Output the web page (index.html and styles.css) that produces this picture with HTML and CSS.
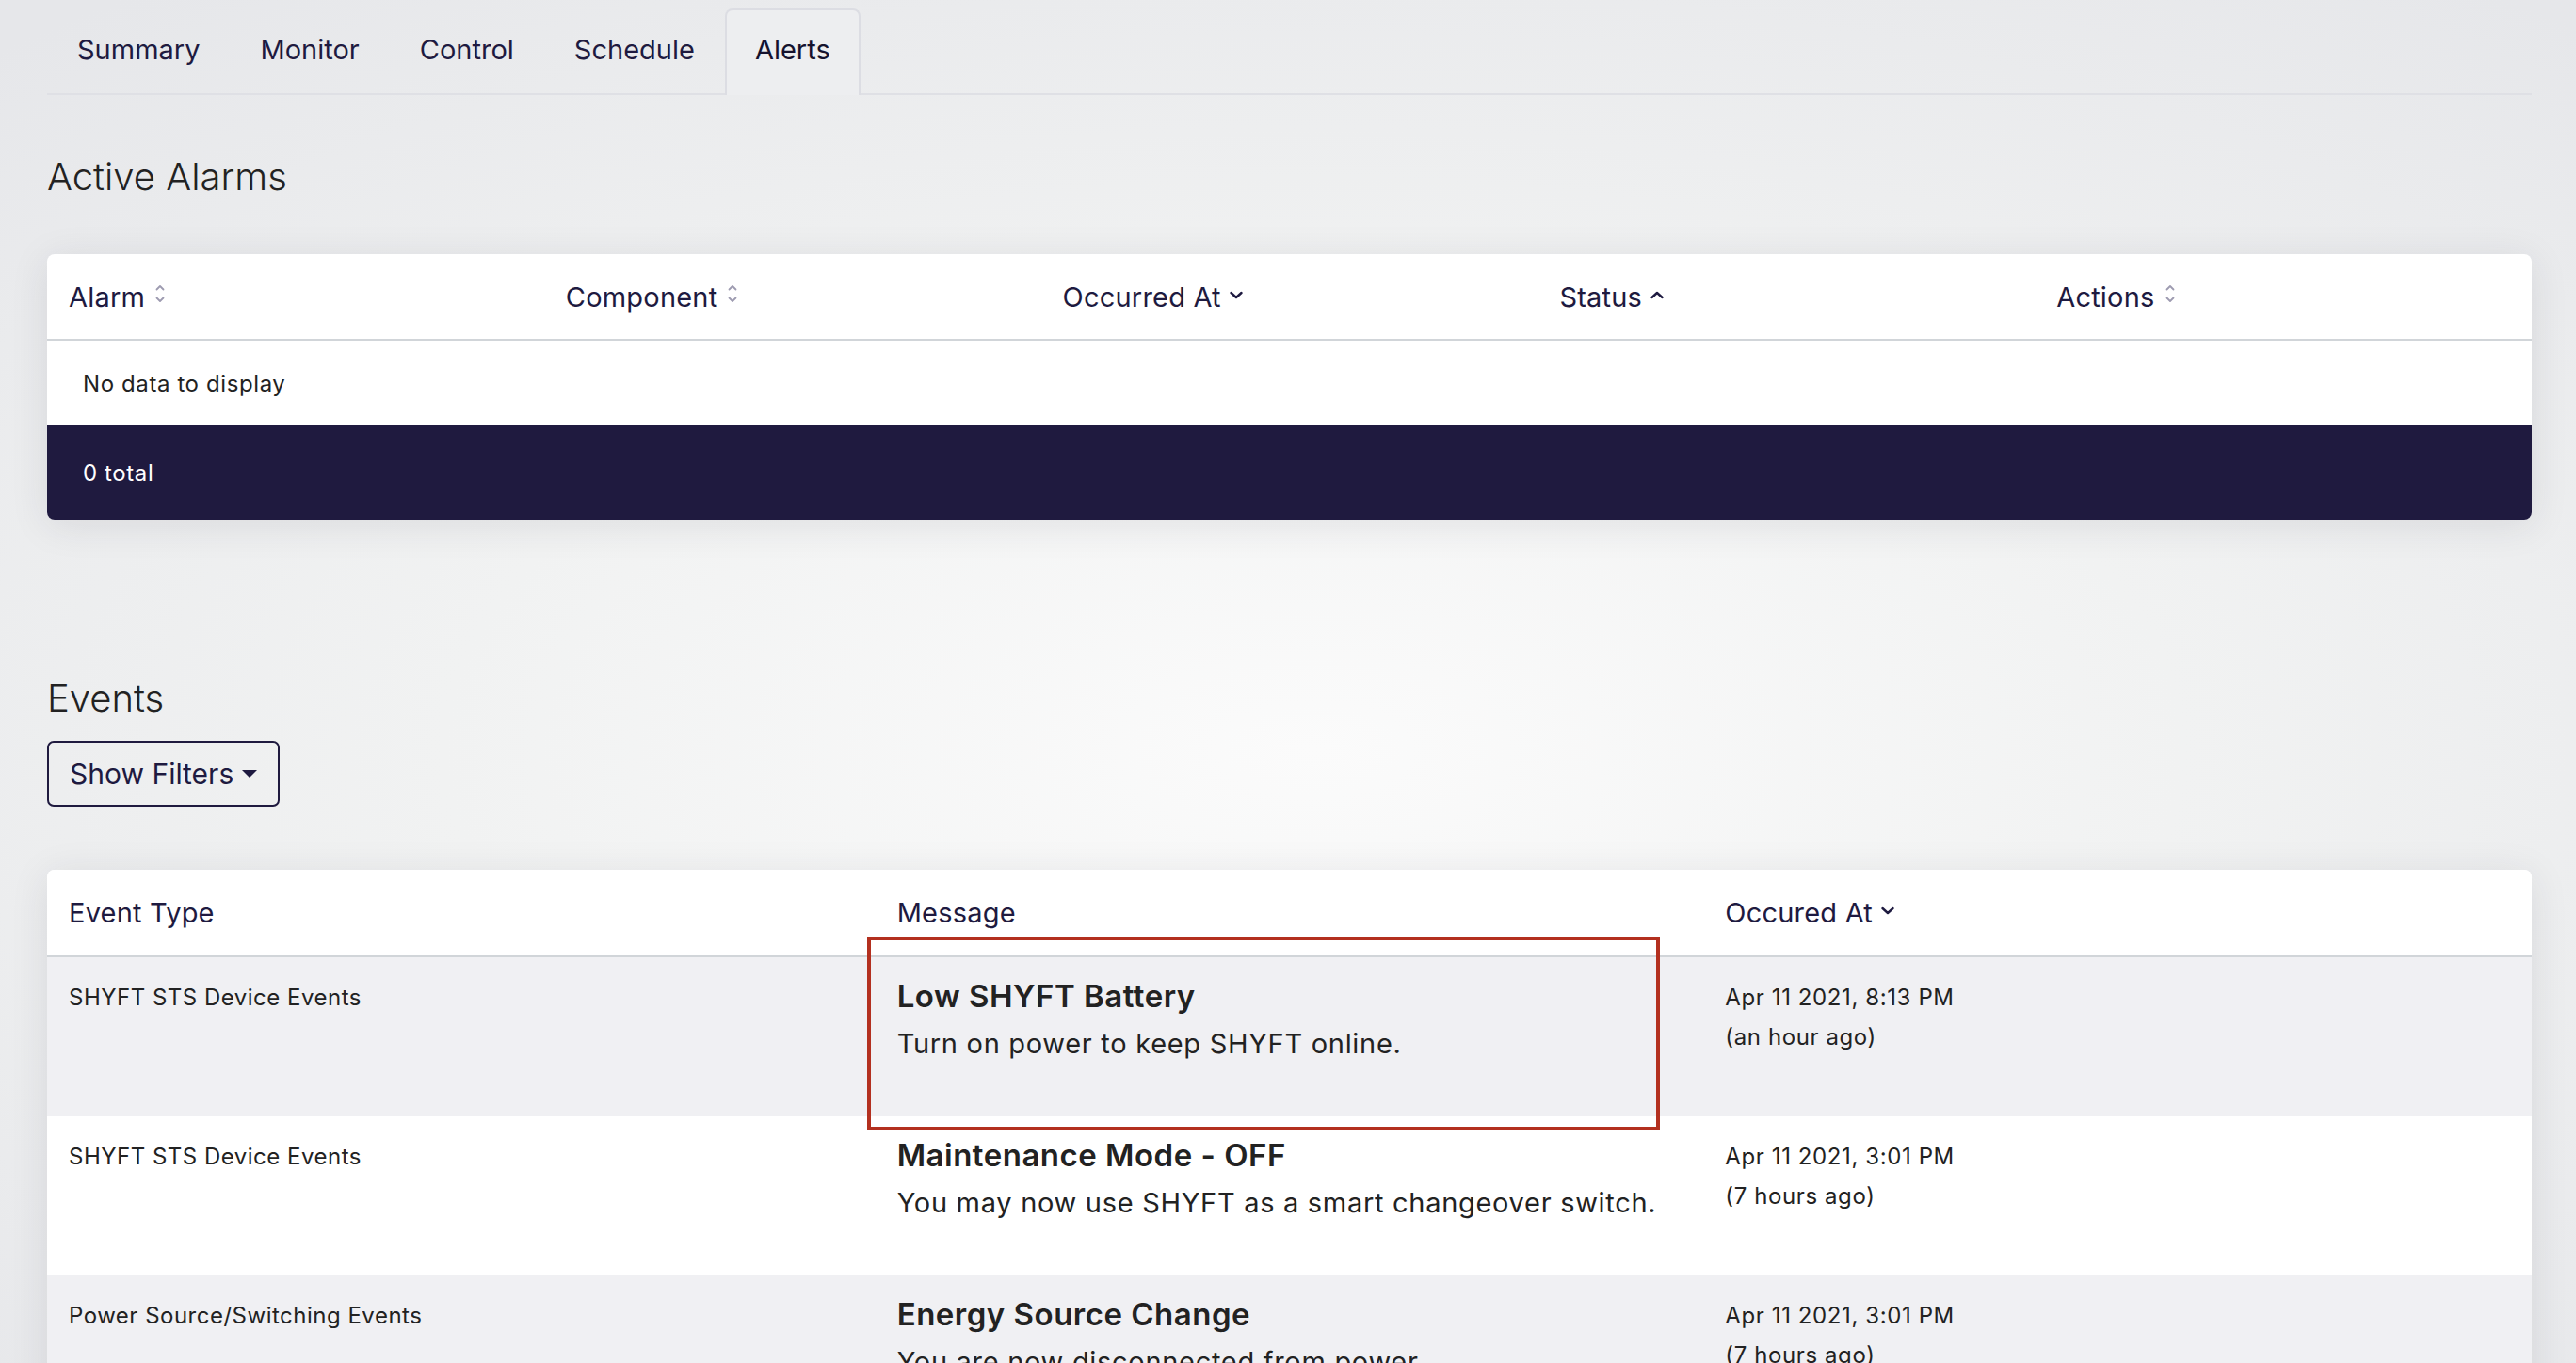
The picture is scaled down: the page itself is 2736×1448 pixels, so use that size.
FILE: index.html
```html
<!DOCTYPE html>
<html lang="en">
<head>
<meta charset="utf-8">
<title>Alerts</title>
<link rel="stylesheet" href="styles.css">
</head>
<body>
<div class="page">
  <nav class="tabs">
    <a class="tab">Summary</a>
    <a class="tab">Monitor</a>
    <a class="tab">Control</a>
    <a class="tab">Schedule</a>
    <a class="tab active">Alerts</a>
  </nav>

  <h2 class="section-title alarms-title">Active Alarms</h2>

  <div class="card alarm-card">
    <div class="alarm-row alarm-head">
      <div class="th">Alarm <svg class="sort-both" width="10" height="22" viewBox="0 0 10 22"><path d="M1.5 6.5 L5 3 L8.5 6.5 M1.5 15.5 L5 19 L8.5 15.5" fill="none" stroke="#9d9bb0" stroke-width="1.8" stroke-linecap="round" stroke-linejoin="round"/></svg></div>
      <div class="th">Component <svg class="sort-both" width="10" height="22" viewBox="0 0 10 22"><path d="M1.5 6.5 L5 3 L8.5 6.5 M1.5 15.5 L5 19 L8.5 15.5" fill="none" stroke="#9d9bb0" stroke-width="1.8" stroke-linecap="round" stroke-linejoin="round"/></svg></div>
      <div class="th">Occurred At <svg class="sort-one" width="14" height="9" viewBox="0 0 14 9"><path d="M1.5 2 L7 7 L12.5 2" fill="none" stroke="#1e1a40" stroke-width="2.4" stroke-linecap="round" stroke-linejoin="round"/></svg></div>
      <div class="th">Status <svg class="sort-one" width="14" height="9" viewBox="0 0 14 9"><path d="M1.5 7 L7 2 L12.5 7" fill="none" stroke="#1e1a40" stroke-width="2.4" stroke-linecap="round" stroke-linejoin="round"/></svg></div>
      <div class="th">Actions <svg class="sort-both" width="10" height="22" viewBox="0 0 10 22"><path d="M1.5 6.5 L5 3 L8.5 6.5 M1.5 15.5 L5 19 L8.5 15.5" fill="none" stroke="#9d9bb0" stroke-width="1.8" stroke-linecap="round" stroke-linejoin="round"/></svg></div>
    </div>
    <div class="empty">No data to display</div>
    <div class="card-footer">0 total</div>
  </div>

  <h2 class="section-title events-title">Events</h2>
  <div class="filter-wrap">
    <button class="filter-btn">Show Filters <span class="caret"></span></button>
  </div>

  <div class="card events-card">
    <div class="ev-row ev-head">
      <div class="th">Event Type</div>
      <div class="th">Message</div>
      <div class="th">Occured At <svg class="sort-one" width="14" height="9" viewBox="0 0 14 9"><path d="M1.5 2 L7 7 L12.5 2" fill="none" stroke="#1e1a40" stroke-width="2.4" stroke-linecap="round" stroke-linejoin="round"/></svg></div>
    </div>

    <div class="ev-row odd">
      <div class="ev-type">SHYFT STS Device Events</div>
      <div class="ev-msg">
        <div class="msg-title">Low SHYFT Battery</div>
        <div class="msg-body">Turn on power to keep SHYFT online.</div>
      </div>
      <div class="ev-date">Apr 11 2021, 8:13 PM<br>(an hour ago)</div>
    </div>

    <div class="ev-row">
      <div class="ev-type">SHYFT STS Device Events</div>
      <div class="ev-msg">
        <div class="msg-title">Maintenance Mode - OFF</div>
        <div class="msg-body">You may now use SHYFT as a smart changeover switch.</div>
      </div>
      <div class="ev-date">Apr 11 2021, 3:01 PM<br>(7 hours ago)</div>
    </div>

    <div class="ev-row odd">
      <div class="ev-type">Power Source/Switching Events</div>
      <div class="ev-msg">
        <div class="msg-title">Energy Source Change</div>
        <div class="msg-body">You are now disconnected from power.</div>
      </div>
      <div class="ev-date">Apr 11 2021, 3:01 PM<br>(7 hours ago)</div>
    </div>

    <div class="highlight"></div>
  </div>
</div>
</body>
</html>
```

FILE: styles.css
```css
* { box-sizing: border-box; }

html, body {
  margin: 0;
  height: 100%;
}

body {
  font-family: Inter, "Liberation Sans", sans-serif;
  color: #222;
  background: radial-gradient(ellipse 75% 70% at 51% 55%, #fbfbfb 0%, #f1f2f2 45%, #e6e7ea 100%);
  background-color: #e9eaec;
  overflow: hidden;
}

.page {
  padding: 9px 47px 0 50px;
}

/* Tabs */
.tabs {
  display: flex;
  border-bottom: 2px solid #dfe0e5;
}

.tab {
  font-size: 29px;
  line-height: 48px;
  padding: 18px 30px 24px;
  border: 2px solid transparent;
  border-bottom: none;
  margin-bottom: -2px;
  color: #1e1a40;
  border-radius: 8px 8px 0 0;
}

.tab.active {
  border-color: #dcdde3;
  background: #edeef0;
  color: #15122e;
}

/* Headings */
.section-title {
  margin: 0;
  font-size: 40px;
  font-weight: 300;
  line-height: 54px;
  color: #222;
}

.alarms-title { margin-top: 60px; }
.events-title { margin-top: 163px; }

/* Cards */
.card {
  background: #fff;
  border-radius: 8px;
  box-shadow: 0 6px 40px rgba(40, 40, 60, 0.10);
  overflow: hidden;
}

.alarm-card { margin-top: 55px; }

.alarm-row {
  display: grid;
  grid-template-columns: repeat(5, 1fr);
}

.alarm-head, .ev-head {
  border-bottom: 2px solid #d1d5d9;
}

.alarm-head { height: 92px; }

.th {
  display: flex;
  align-items: center;
  gap: 9px;
  padding-left: 23px;
  font-size: 29px;
  letter-spacing: 0.2px;
  color: #1e1a40;
}

.sort-both { margin-top: -6px; margin-left: 2px; }
.sort-one { margin-top: -4px; }

.empty {
  height: 90px;
  display: flex;
  align-items: center;
  padding-left: 38px;
  font-size: 24px;
  letter-spacing: 0.6px;
  color: #222;
}

.card-footer {
  height: 100px;
  display: flex;
  align-items: center;
  padding-left: 38px;
  background: #1f1a3f;
  color: #fff;
  font-size: 24px;
  letter-spacing: 0.6px;
}

/* Filter button */
.filter-wrap { margin-top: 18px; }

.filter-btn {
  display: inline-flex;
  align-items: center;
  gap: 9px;
  height: 70px;
  padding: 0 22px;
  font-family: inherit;
  font-size: 30px;
  color: #1e1a40;
  background: transparent;
  border: 2px solid #1f1a3f;
  border-radius: 7px;
}

.caret {
  width: 0;
  height: 0;
  border-left: 8.5px solid transparent;
  border-right: 8.5px solid transparent;
  border-top: 8px solid #1e1a40;
}

/* Events table */
.events-card {
  margin-top: 67px;
  position: relative;
}

.ev-row {
  display: grid;
  grid-template-columns: repeat(3, 1fr);
  height: 169px;
  background: #fff;
}

.ev-row.odd { background: #f0f0f3; }

.ev-row.ev-head {
  height: 93px;
  background: #fff;
}

.ev-type {
  padding: 22px 23px 0;
  font-size: 24px;
  line-height: 42px;
  letter-spacing: 0.5px;
  color: #222;
}

.ev-msg {
  padding: 19px 23px 0;
  color: #222;
}

.msg-title {
  font-size: 33px;
  line-height: 44px;
  font-weight: 600;
  letter-spacing: 0.5px;
  margin-bottom: 6px;
}

.msg-body {
  font-size: 29px;
  line-height: 46px;
  letter-spacing: 0.7px;
}

.ev-date {
  padding: 22px 23px 0;
  font-size: 24px;
  line-height: 42px;
  letter-spacing: 0.6px;
  color: #222;
}

/* Annotation overlay */
.highlight {
  position: absolute;
  left: 871px;
  top: 71px;
  width: 842px;
  height: 206px;
  border: 4px solid #b3301f;
  pointer-events: none;
}
```
